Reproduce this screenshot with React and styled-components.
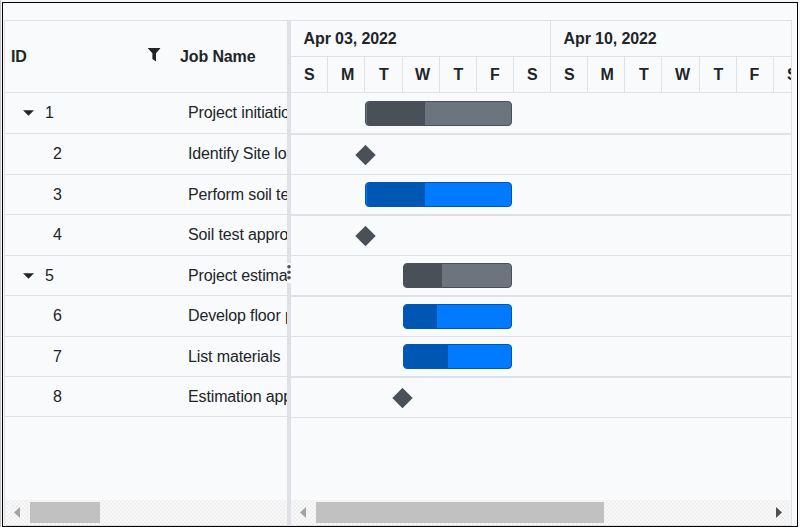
import React from "react";
import styled, { createGlobalStyle } from "styled-components";

const line = "#dee2e6";
const surface = "#f8fafc";

const GlobalStyle = createGlobalStyle`
  *, *::before, *::after { box-sizing: border-box; }
  body {
    margin: 0;
    background: #f4f6f8;
    overflow: hidden;
    font: 16px/20px "Liberation Sans", Arial, sans-serif;
    color: #212529;
  }
`;

const Page = styled.div`
  width: 800px;
  height: 527px;
  padding: 2px 2px 0 1px;
  border-left: 1px solid #c4c4c4;
`;

const Frame = styled.div`
  width: 796px;
  height: 525px;
  padding: 17px 5px 0 1px;
  border: 1px solid #000;
  background: ${surface};
`;

const Gantt = styled.div`
  display: flex;
  width: 788px;
  height: 506px;
  border: 1px solid ${line};
`;

const GridPane = styled.section`
  display: flex;
  flex-direction: column;
  width: 282px;
  overflow: hidden;
  white-space: nowrap;
`;

const GridHeader = styled.div`
  display: flex;
  align-items: center;
  flex: none;
  height: 72px;
  border-bottom: 1px solid ${line};
  font-weight: 700;
  letter-spacing: -0.12px;
`;

const IdHeading = styled.div`
  display: flex;
  justify-content: space-between;
  flex: none;
  width: 175px;
  padding: 0 19px 0 6px;
`;

const FilterIcon = styled.svg`
  width: 13px;
  height: 14px;
  margin-top: 1px;
`;

const GridRow = styled.div`
  display: flex;
  flex: none;
  height: ${(p) => p.$height}px;
  padding-top: 10px;
  border-bottom: 1px solid ${line};
`;

const IdCell = styled.div`
  display: flex;
  flex: none;
  width: 183px;
  padding-left: ${(p) => (p.$parent ? 18 : 48)}px;
`;

const Caret = styled.svg`
  flex: none;
  width: 12px;
  height: 6px;
  margin: 7px 10px 0 0;
`;

const NameCell = styled.div`
  flex: none;
  letter-spacing: -0.13px;
`;

const Splitter = styled.div`
  display: flex;
  flex: none;
  flex-direction: column;
  width: 4px;
  padding-top: 242px;
  background: ${line};
`;

const Handle = styled.svg`
  width: 4px;
  height: 20px;
  background: ${surface};
`;

const ChartPane = styled.section`
  display: flex;
  flex-direction: column;
  width: 500px;
  overflow: hidden;
  white-space: nowrap;
  font-weight: 700;
`;

const Weeks = styled.div`
  display: flex;
  flex: none;
  height: 36px;
  border-bottom: 1px solid ${line};
  letter-spacing: -0.1px;
`;

const Week = styled.div`
  flex: none;
  width: 260px;
  padding: 8px 0 0 12.5px;
  border-right: 1px solid ${line};
`;

const Days = styled.div`
  display: flex;
  flex: none;
  height: 36px;
  border-bottom: 1px solid ${line};
`;

const Day = styled.div`
  flex: none;
  width: ${(p) => p.$width}px;
  padding: 8px 0 0 ${(p) => p.$inset}px;
  border-right: 1px solid ${line};
`;

const TrackRow = styled.div`
  flex: none;
  height: ${(p) => p.$height}px;
  padding: ${(p) => p.$top}px 0 0 ${(p) => p.$left}px;
  border-bottom: ${(p) => p.$rule}px solid ${line};
`;

const Bar = styled.div`
  width: ${(p) => p.$width}px;
  height: 25px;
  border: 1px solid ${(p) => (p.$summary ? "#495057" : "#0056b3")};
  border-radius: 4px;
  background: ${(p) => (p.$summary ? "#6c757d" : "#007bff")};
  overflow: hidden;
`;

const Progress = styled.div`
  width: ${(p) => p.$width}px;
  height: 23px;
  margin-left: ${(p) => p.$gap}px;
  border-radius: 3px 0 0 3px;
  background: ${(p) => (p.$summary ? "#495057" : "#0056b3")};
`;

const Milestone = styled.svg`
  display: block;
  width: 21px;
  height: 21px;
  fill: #495057;
`;

const Scrollbar = styled.div`
  display: flex;
  flex: none;
  height: 25px;
  margin-top: auto;
  padding: 2px 9px 0;
  background-color: #efefef;
  background-image: radial-gradient(circle, #f9f9f9 0.7px, transparent 0.8px),
    radial-gradient(circle, #f9f9f9 0.7px, transparent 0.8px);
  background-size: 4px 4px;
  background-position: 0 0, 2px 2px;
`;

const Arrow = styled.svg`
  flex: none;
  width: 6px;
  height: 11px;
  margin-top: 5px;
  fill: ${(p) => (p.$active ? "#505050" : "#a3a3a3")};
`;

const Thumb = styled.div`
  width: ${(p) => p.$width}px;
  height: 21px;
  margin: 0 auto 0 10px;
  background: #c1c1c1;
`;

const days = [
  ["S", 37, 13], ["M", 37, 13], ["T", 38, 14], ["W", 37, 12],
  ["T", 37, 13.5], ["F", 37, 13], ["S", 37, 13],
  ["S", 37, 13], ["M", 37, 12.5], ["T", 37, 14], ["W", 38, 13],
  ["T", 37, 13.5], ["F", 37, 12.5], ["S", 37, 13],
];

const tasks = [
  { id: 1, name: "Project initiation", height: 41, parent: true, track: 42, rule: 2, top: 8, left: 74, width: 147, progress: 58, gap: 1 },
  { id: 2, name: "Identify Site location", height: 41, track: 40, rule: 1, top: 10, left: 64 },
  { id: 3, name: "Perform soil test", height: 40, track: 41, rule: 2, top: 7, left: 74, width: 147, progress: 58, gap: 1 },
  { id: 4, name: "Soil test approval", height: 41, track: 40, rule: 1, top: 10, left: 64 },
  { id: 5, name: "Project estimation", height: 40, parent: true, track: 41, rule: 2, top: 7, left: 112, width: 109, progress: 38, gap: 0 },
  { id: 6, name: "Develop floor plan for estimation", height: 41, track: 40, rule: 1, top: 7, left: 112, width: 109, progress: 33, gap: 0 },
  { id: 7, name: "List materials", height: 40, track: 41, rule: 2, top: 7, left: 112, width: 109, progress: 44, gap: 0 },
  { id: 8, name: "Estimation approval", height: 40, track: 40, rule: 1, top: 10, left: 101 },
];

export default function App() {
  return (
    <>
      <GlobalStyle />
      <Page>
        <Frame>
          <Gantt>
            <GridPane>
              <GridHeader>
                <IdHeading>
                  ID
                  <FilterIcon viewBox="0 0 13 14">
                    <path d="M0 0h12.2v.5L8 5.2v8.3L4.4 11V5.2L0 .5z" fill="#212529" />
                  </FilterIcon>
                </IdHeading>
                Job Name
              </GridHeader>
              {tasks.map((t) => (
                <GridRow key={t.id} $height={t.height}>
                  <IdCell $parent={t.parent}>
                    {t.parent && (
                      <Caret viewBox="0 0 12 6">
                        <path d="M0 .3h11L5.5 5.8z" fill="#212529" />
                      </Caret>
                    )}
                    {t.id}
                  </IdCell>
                  <NameCell>{t.name}</NameCell>
                </GridRow>
              ))}
              <Scrollbar>
                <Arrow viewBox="0 0 6 11"><path d="M6 0v11L0 5.5z" /></Arrow>
                <Thumb $width={70} />
              </Scrollbar>
            </GridPane>
            <Splitter>
              <Handle viewBox="0 0 4 20">
                <g fill="#495057">
                  <circle cx="2" cy="3.8" r="1.8" />
                  <circle cx="2" cy="9.3" r="1.8" />
                  <circle cx="2" cy="14.8" r="1.8" />
                </g>
              </Handle>
            </Splitter>
            <ChartPane>
              <Weeks>
                <Week>Apr 03, 2022</Week>
                <Week>Apr 10, 2022</Week>
              </Weeks>
              <Days>
                {days.map(([label, width, inset], i) => (
                  <Day key={i} $width={width} $inset={inset}>{label}</Day>
                ))}
              </Days>
              {tasks.map((t) => (
                <TrackRow key={t.id} $height={t.track} $rule={t.rule} $top={t.top} $left={t.left}>
                  {t.width ? (
                    <Bar $width={t.width} $summary={t.parent}>
                      <Progress $width={t.progress} $gap={t.gap} $summary={t.parent} />
                    </Bar>
                  ) : (
                    <Milestone viewBox="0 0 21 21"><path d="M10.5-.1 20.7 10 10.5 20.2.3 10z" /></Milestone>
                  )}
                </TrackRow>
              ))}
              <Scrollbar>
                <Arrow viewBox="0 0 6 11"><path d="M6 0v11L0 5.5z" /></Arrow>
                <Thumb $width={288} />
                <Arrow viewBox="0 0 6 11" $active><path d="M0 0v11l6-5.5z" /></Arrow>
              </Scrollbar>
            </ChartPane>
          </Gantt>
        </Frame>
      </Page>
    </>
  );
}
